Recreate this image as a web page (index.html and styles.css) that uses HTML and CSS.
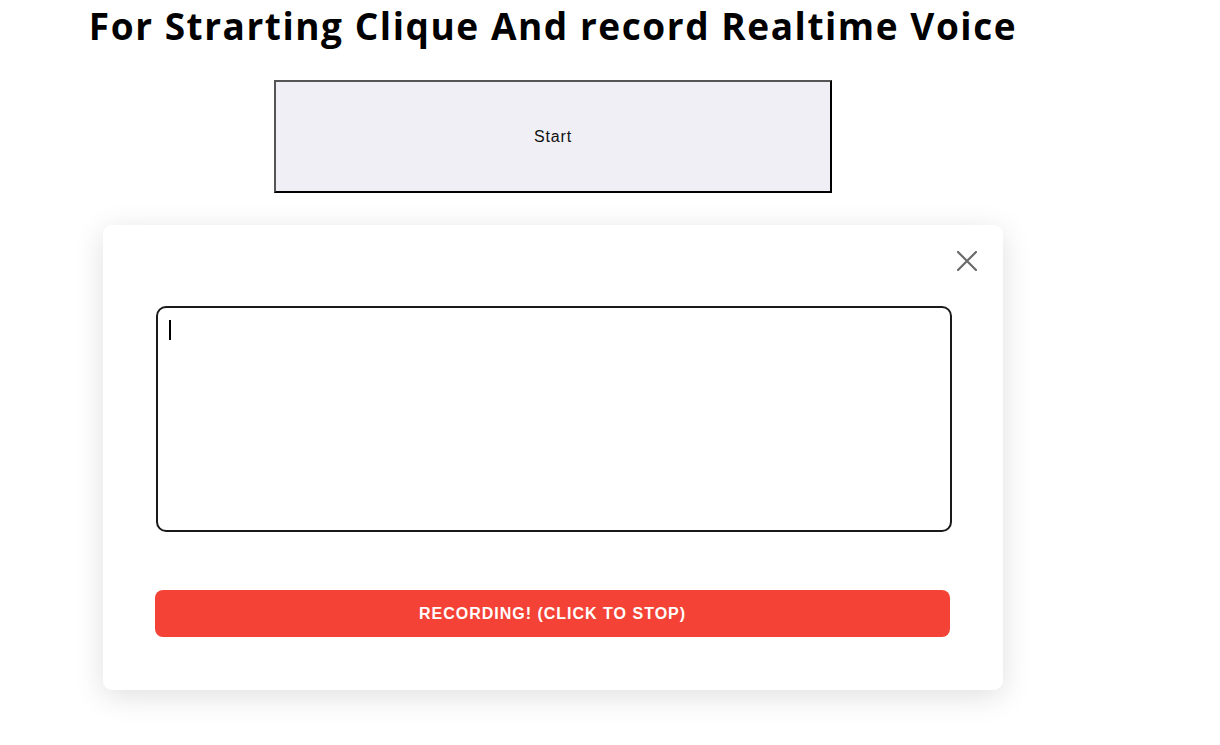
FILE: index.html
```html
<!DOCTYPE html>
<html lang="en">
<head>
<meta charset="utf-8">
<title>Voice Recorder</title>
<link rel="stylesheet" href="styles.css">
</head>
<body>
<div class="page">
  <h1 class="title">For Strarting Clique And record Realtime Voice</h1>
  <button class="start-btn" type="button">Start</button>
  <div class="modal">
    <button class="close-btn" type="button" aria-label="Close">
      <svg width="20" height="20" viewBox="0 0 20 20"><path d="M1 1 L19 19 M19 1 L1 19" stroke="#6b6b6b" stroke-width="2.2" stroke-linecap="square" fill="none"/></svg>
    </button>
    <div class="field">
      <textarea class="transcript"></textarea>
      <span class="caret"></span>
    </div>
    <button class="record-btn" type="button">RECORDING! (CLICK TO STOP)</button>
  </div>
</div>
</body>
</html>
```
FILE: styles.css
```css
html, body {
  margin: 0;
  padding: 0;
  background: #ffffff;
}
.page {
  width: 1106px;
  min-height: 745px;
  display: flex;
  flex-direction: column;
  align-items: center;
}
.title {
  margin: 0;
  padding-top: 2px;
  font-family: "Open Sans", "Noto Sans", sans-serif;
  font-weight: 700;
  font-size: 37px;
  line-height: 47px;
  color: #000;
  letter-spacing: 1.55px;
  white-space: nowrap;
}
.start-btn {
  margin-top: 31px;
  width: 558px;
  height: 113px;
  background: #efeff5;
  border: 2px solid;
  border-color: #555 #000 #000 #555;
  font-family: "Liberation Sans", Arial, sans-serif;
  font-size: 16px;
  letter-spacing: 0.8px;
  color: #111;
  padding: 0;
}
.modal {
  margin-top: 32px;
  width: 900px;
  height: 465px;
  box-sizing: border-box;
  background: #fff;
  border-radius: 9px;
  box-shadow: 0 6px 30px rgba(0, 0, 0, 0.13);
  position: relative;
  padding: 81px 51px 0 53px;
  display: flex;
  flex-direction: column;
}
.close-btn {
  position: absolute;
  top: 26px;
  right: 26px;
  width: 20px;
  height: 20px;
  padding: 0;
  border: none;
  background: none;
  display: flex;
}
.field {
  position: relative;
  width: 796px;
  height: 226px;
}
.transcript {
  width: 100%;
  height: 100%;
  box-sizing: border-box;
  border: 2px solid #1a1a1a;
  border-radius: 10px;
  resize: none;
  outline: none;
  padding: 12px;
  font-family: "Liberation Sans", Arial, sans-serif;
  font-size: 16px;
}
.caret {
  position: absolute;
  left: 13px;
  top: 14px;
  width: 2px;
  height: 20px;
  background: #000;
}
.record-btn {
  margin-top: 58px;
  margin-left: -1px;
  width: 795px;
  height: 47px;
  border: none;
  border-radius: 8px;
  background: #f44336;
  color: #fff;
  font-family: "Liberation Sans", Arial, sans-serif;
  font-weight: 700;
  font-size: 16px;
  letter-spacing: 1px;
  padding: 0;
}
```
